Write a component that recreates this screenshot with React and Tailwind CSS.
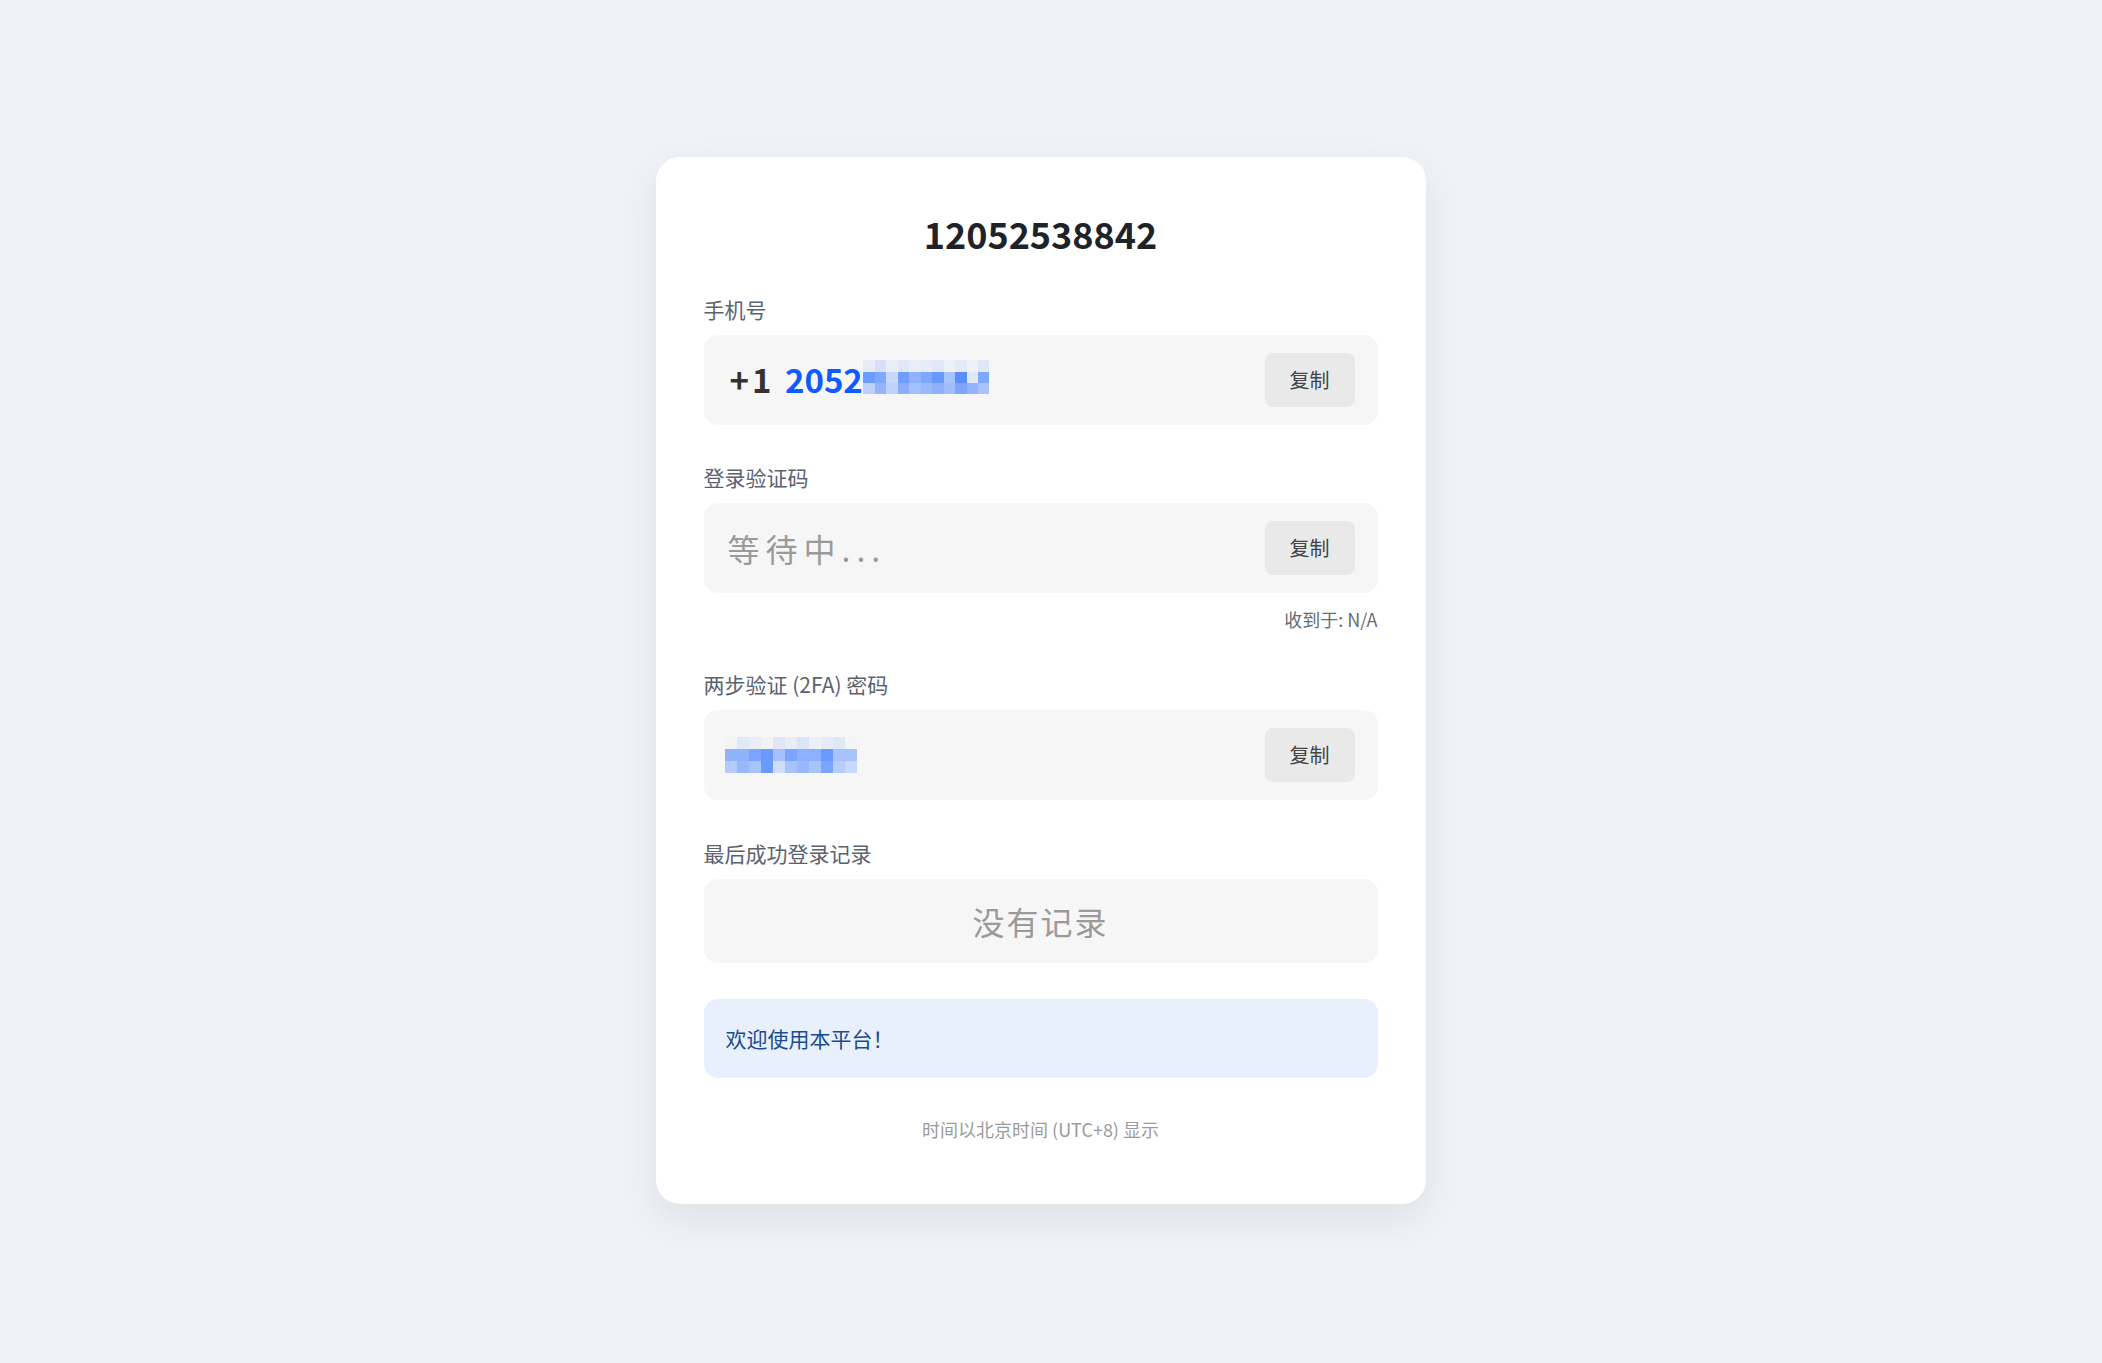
import React from 'react';

const PHONE_MOSAIC = [
  ['#e6ecf8', '#d5e0f8', '#e8edf8', '#dfe7f8', '#e8edf8', '#e5ebf8', '#e0e8f8', '#eef1f8', '#e3eaf8', '#eef1f8', '#e0e8f8'],
  ['#6b9cff', '#7fa8ff', '#c8d8f8', '#6f9eff', '#8fb1ff', '#7ea8ff', '#6797ff', '#a8c2fc', '#5a8dff', '#dfe7f8', '#7fa8ff'],
  ['#bcd0fb', '#94b4fd', '#bfd2fb', '#8aaefd', '#a3bffc', '#9ab9fc', '#8fb1fd', '#9fbcfc', '#7ea6fd', '#94b4fd', '#a9c3fc'],
];

const TFA_MOSAIC = [
  ['#f3f4f6', '#e2e8f5', '#e8edf7', '#f0f2f6', '#dfe6f6', '#e8edf7', '#dae3f7', '#ebeff7', '#e5ebf7', '#e0e7f7', '#f3f4f6'],
  ['#8fb2fd', '#8fb2fd', '#7aa4fe', '#6a9afe', '#a5c0fc', '#7aa4fe', '#8cb0fd', '#8cb0fd', '#6a9afe', '#a8c2fc', '#a8c2fc'],
  ['#b3cafb', '#99b8fc', '#a8c2fc', '#6a9afe', '#d0dcf8', '#a8c2fc', '#99b8fc', '#a8c2fc', '#7aa4fe', '#b6ccfb', '#c8d8f8'],
];

// pixelated censor block
function Mosaic({ rows, cell = 12, className = '' }) {
  const w = rows[0].length * cell;
  const h = rows.length * cell;
  return (
    <svg width={w} height={h} viewBox={`0 0 ${w} ${h}`} className={className} shapeRendering="crispEdges">
      {rows.map((row, r) =>
        row.map((c, i) => <rect key={`${r}-${i}`} x={i * cell} y={r * cell} width={cell} height={cell} fill={c} />)
      )}
    </svg>
  );
}

function Label({ children, className = '' }) {
  return <div className={`text-[21px] leading-[28px] text-[#5a6270] mb-3 ${className}`}>{children}</div>;
}

function CopyButton() {
  return (
    <button className="w-[90px] h-[54px] rounded-lg bg-[#e9e9e9] text-[20px] text-[#444] shrink-0">
      复制
    </button>
  );
}

function FieldBox({ children, className = '' }) {
  return (
    <div className={`h-[90px] rounded-[14px] bg-[#f6f6f6] flex items-center justify-between pr-[23px] ${className}`}>
      {children}
      <CopyButton />
    </div>
  );
}

export default function App() {
  return (
    <div className="min-h-screen bg-[#eff2f6] flex justify-center pt-[157px] pr-[21px] font-['Noto_Sans_CJK_SC','Noto_Sans',sans-serif]">
      <div className="w-[770px] h-[1047px] bg-white rounded-3xl shadow-[0_14px_40px_rgba(15,23,42,0.08)] px-12 pt-[52px]">
        <h1 className="text-center text-[36px] leading-[48px] font-semibold text-[#1f2328] mb-[38px]">
          12052538842
        </h1>

        <Label>手机号</Label>
        <FieldBox className="pl-[26px]">
          <div className="flex items-center text-[33px] font-bold">
            <span className="text-[#333] tracking-[3px]">+1&nbsp;</span>
            <span className="text-[#0f5bff]">2052</span>
            <Mosaic rows={PHONE_MOSAIC} cell={11.5} className="mb-[6px]" />
          </div>
        </FieldBox>

        <Label className="mt-[38px]">登录验证码</Label>
        <FieldBox className="pl-6">
          <span className="text-[32px] tracking-[6px] text-[#9a9a9a]">等待中...</span>
        </FieldBox>
        <div className="mt-[14px] text-right text-[18px] leading-[24px] text-[#666c75]">收到于: N/A</div>

        <Label className="mt-[39px]">两步验证 (2FA) 密码</Label>
        <FieldBox className="pl-[21px]">
          <Mosaic rows={TFA_MOSAIC} />
        </FieldBox>

        <Label className="mt-[39px]">最后成功登录记录</Label>
        <div className="h-[84px] rounded-[14px] bg-[#f6f6f6] flex items-center justify-center">
          <span className="text-[32px] tracking-[2px] text-[#9a9a9a]">没有记录</span>
        </div>

        <div className="mt-9 h-[79px] rounded-[14px] bg-[#e8f0fd] flex items-center px-[22px]">
          <span className="text-[21px] text-[#1a4a8f]">欢迎使用本平台！</span>
        </div>

        <div className="mt-[39px] text-center text-[18px] leading-[24px] text-[#9a9a9a]">
          时间以北京时间 (UTC+8) 显示
        </div>
      </div>
    </div>
  );
}
